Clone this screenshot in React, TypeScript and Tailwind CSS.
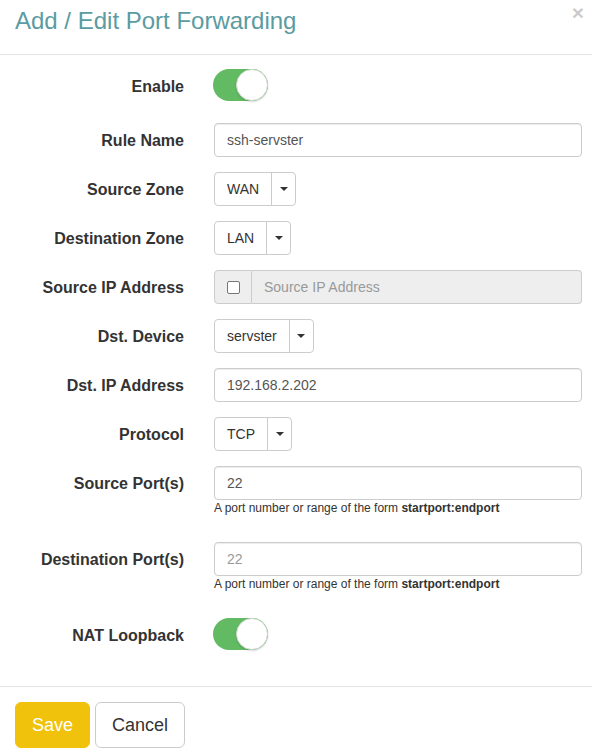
import React from 'react';

const Label = ({ children }: { children: React.ReactNode }) => (
  <label className="w-[184px] shrink-0 pt-[8px] text-right text-[16px] leading-[20px] font-bold text-[#333]">
    {children}
  </label>
);

const Toggle = () => (
  <div className="relative h-[32px] w-[55px] rounded-full bg-[#62bb63]">
    <div className="absolute right-0 top-0 h-[32px] w-[32px] rounded-full border border-[#cfd8cf] bg-white shadow-[0_1px_2px_rgba(0,0,0,0.15)]" />
  </div>
);

const Select = ({ value }: { value: string }) => (
  <div className="inline-flex h-[34px] rounded-[4px] border border-[#ccc] bg-white text-[14px] text-[#333]">
    <span className="flex items-center px-[12px]">{value}</span>
    <span className="flex w-[24px] items-center justify-center border-l border-[#ccc]">
      <span className="h-0 w-0 border-x-[4px] border-t-[4px] border-x-transparent border-t-[#333]" />
    </span>
  </div>
);

const TextInput = ({ value, placeholder }: { value?: string; placeholder?: string }) => (
  <input
    readOnly
    defaultValue={value}
    placeholder={placeholder}
    className="h-[34px] w-full rounded-[4px] border border-[#ccc] bg-white px-[12px] text-[14px] text-[#555] shadow-[inset_0_1px_1px_rgba(0,0,0,0.075)] outline-none placeholder:text-[#999]"
  />
);

const Help = () => (
  <p className="mb-[10px] text-[12px] leading-[17px] text-[#333]">
    A port number or range of the form <b>startport:endport</b>
  </p>
);

export default function App() {
  return (
    <div className="min-h-screen w-[592px] bg-white font-['Liberation_Sans',Arial,sans-serif] text-[14px] text-[#333]">
      {/* header */}
      <div className="relative border-b border-[#e5e5e5] px-[15px] pt-[6px] pb-[18px]">
        <h4 className="text-[24px] leading-[30px] text-[#5b9ba1]">Add / Edit Port Forwarding</h4>
        <button className="absolute right-[8px] top-[2px] text-[21px] font-bold leading-[21px] text-black opacity-20">
          ×
        </button>
      </div>

      {/* body */}
      <div className="flex flex-col gap-[15px] pt-[14px] pb-[29px]">
        <div className="flex h-[39px]">
          <Label>Enable</Label>
          <div className="ml-[29px]">
            <Toggle />
          </div>
        </div>

        <div className="flex">
          <Label>Rule Name</Label>
          <div className="ml-[30px] w-[368px]">
            <TextInput value="ssh-servster" />
          </div>
        </div>

        <div className="flex">
          <Label>Source Zone</Label>
          <div className="ml-[30px]">
            <Select value="WAN" />
          </div>
        </div>

        <div className="flex">
          <Label>Destination Zone</Label>
          <div className="ml-[30px]">
            <Select value="LAN" />
          </div>
        </div>

        <div className="flex">
          <Label>Source IP Address</Label>
          <div className="ml-[30px] flex h-[34px] w-[368px]">
            <span className="flex w-[38px] items-center justify-center rounded-l-[4px] border border-[#ccc] bg-[#eee]">
              <span className="h-[13px] w-[13px] rounded-[2px] border border-[#767676] bg-white" />
            </span>
            <input
              disabled
              placeholder="Source IP Address"
              className="h-[34px] flex-1 rounded-r-[4px] border border-l-0 border-[#ccc] bg-[#eee] px-[12px] text-[14px] placeholder:text-[#999]"
            />
          </div>
        </div>

        <div className="flex">
          <Label>Dst. Device</Label>
          <div className="ml-[30px]">
            <Select value="servster" />
          </div>
        </div>

        <div className="flex">
          <Label>Dst. IP Address</Label>
          <div className="ml-[30px] w-[368px]">
            <TextInput value="192.168.2.202" />
          </div>
        </div>

        <div className="flex">
          <Label>Protocol</Label>
          <div className="ml-[30px]">
            <Select value="TCP" />
          </div>
        </div>

        <div className="flex">
          <Label>Source Port(s)</Label>
          <div className="ml-[30px] w-[368px]">
            <TextInput value="22" />
            <Help />
          </div>
        </div>

        <div className="flex">
          <Label>Destination Port(s)</Label>
          <div className="ml-[30px] w-[368px]">
            <TextInput placeholder="22" />
            <Help />
          </div>
        </div>

        <div className="flex h-[39px]">
          <Label>NAT Loopback</Label>
          <div className="ml-[29px]">
            <Toggle />
          </div>
        </div>
      </div>

      {/* footer */}
      <div className="flex gap-[5px] border-t border-[#e5e5e5] px-[15px] pt-[15px] pb-[15px]">
        <button className="rounded-[6px] border border-[#f0c20c] bg-[#f0c20c] px-[16px] py-[10px] text-[18px] leading-[24px] text-white">
          Save
        </button>
        <button className="rounded-[6px] border border-[#ccc] bg-white px-[16px] py-[10px] text-[18px] leading-[24px] text-[#333]">
          Cancel
        </button>
      </div>
    </div>
  );
}
